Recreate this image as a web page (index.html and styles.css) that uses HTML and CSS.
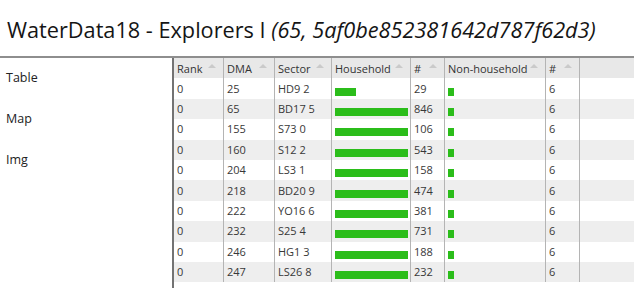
FILE: index.html
```html
<!DOCTYPE html>
<html>
<head>
<meta charset="utf-8">
<link rel="stylesheet" href="styles.css">
</head>
<body>
<header class="top">
  <h1 class="title">WaterData18 - Explorers I <em>(65, 5af0be852381642d787f62d3)</em></h1>
</header>
<div class="layout">
  <nav class="side">
    <a class="side-link">Table</a>
    <a class="side-link">Map</a>
    <a class="side-link">Img</a>
  </nav>
  <main class="panel">
    <table class="grid">
      <colgroup>
        <col class="c-rank"><col class="c-dma"><col class="c-sector"><col class="c-hh"><col class="c-num"><col class="c-nhh"><col class="c-num2"><col>
      </colgroup>
      <thead>
        <tr>
          <th><div class="th-in">Rank<span class="sort"></span></div></th>
          <th><div class="th-in">DMA<span class="sort"></span></div></th>
          <th><div class="th-in">Sector<span class="sort"></span></div></th>
          <th><div class="th-in">Household<span class="sort"></span></div></th>
          <th><div class="th-in">#<span class="sort"></span></div></th>
          <th><div class="th-in">Non-household<span class="sort"></span></div></th>
          <th><div class="th-in">#<span class="sort"></span></div></th>
          <th class="filler"></th>
        </tr>
      </thead>
      <tbody>
        <tr><td>0</td><td>25</td><td>HD9 2</td><td><span class="bar" style="width:29%"></span></td><td>29</td><td><span class="bar" style="width:6%"></span></td><td>6</td><td class="filler"></td></tr>
        <tr><td>0</td><td>65</td><td>BD17 5</td><td><span class="bar" style="width:100%"></span></td><td>846</td><td><span class="bar" style="width:6%"></span></td><td>6</td><td class="filler"></td></tr>
        <tr><td>0</td><td>155</td><td>S73 0</td><td><span class="bar" style="width:100%"></span></td><td>106</td><td><span class="bar" style="width:6%"></span></td><td>6</td><td class="filler"></td></tr>
        <tr><td>0</td><td>160</td><td>S12 2</td><td><span class="bar" style="width:100%"></span></td><td>543</td><td><span class="bar" style="width:6%"></span></td><td>6</td><td class="filler"></td></tr>
        <tr><td>0</td><td>204</td><td>LS3 1</td><td><span class="bar" style="width:100%"></span></td><td>158</td><td><span class="bar" style="width:6%"></span></td><td>6</td><td class="filler"></td></tr>
        <tr><td>0</td><td>218</td><td>BD20 9</td><td><span class="bar" style="width:100%"></span></td><td>474</td><td><span class="bar" style="width:6%"></span></td><td>6</td><td class="filler"></td></tr>
        <tr><td>0</td><td>222</td><td>YO16 6</td><td><span class="bar" style="width:100%"></span></td><td>381</td><td><span class="bar" style="width:6%"></span></td><td>6</td><td class="filler"></td></tr>
        <tr><td>0</td><td>232</td><td>S25 4</td><td><span class="bar" style="width:100%"></span></td><td>731</td><td><span class="bar" style="width:6%"></span></td><td>6</td><td class="filler"></td></tr>
        <tr><td>0</td><td>246</td><td>HG1 3</td><td><span class="bar" style="width:100%"></span></td><td>188</td><td><span class="bar" style="width:6%"></span></td><td>6</td><td class="filler"></td></tr>
        <tr><td>0</td><td>247</td><td>LS26 8</td><td><span class="bar" style="width:100%"></span></td><td>232</td><td><span class="bar" style="width:6%"></span></td><td>6</td><td class="filler"></td></tr>
      </tbody>
    </table>
  </main>
</div>
</body>
</html>
```

FILE: styles.css
```css
html, body {
  margin: 0;
  padding: 0;
  background: #fff;
  font-family: "Open Sans", "Noto Sans", sans-serif;
  color: #222;
  overflow: hidden;
}

.top {
  height: 58px;
  border-bottom: 2px solid #8e8e8e;
  box-sizing: border-box;
  padding: 16px 0 0 7px;
}

.title {
  margin: 0;
  font-size: 21.7px;
  font-weight: 400;
  line-height: 28px;
  color: #151515;
  white-space: nowrap;
}

.title em {
  font-style: italic;
}

.layout {
  display: flex;
  height: 230px;
}

.side {
  width: 172px;
  flex: none;
  display: flex;
  flex-direction: column;
  padding: 11px 0 0 6px;
  box-sizing: border-box;
  gap: 23px;
}

.side-link {
  font-size: 12.5px;
  line-height: 18px;
  color: #222;
}

.panel {
  flex: 1;
  border-left: 2px solid #737373;
  min-width: 0;
  overflow: hidden;
}

.grid {
  width: 100%;
  table-layout: fixed;
  border-collapse: separate;
  border-spacing: 0;
  font-size: 11px;
  color: #383838;
}

.c-rank { width: 50px; }
.c-dma { width: 51px; }
.c-sector { width: 57px; }
.c-hh { width: 79px; }
.c-num { width: 34px; }
.c-nhh { width: 101px; }
.c-num2 { width: 34px; }

.grid th {
  background: #e8e8e8;
  font-weight: 400;
  text-align: left;
  height: 20.4px;
  padding: 0 0 0 3px;
  border-right: 1px solid #b4b4b4;
  box-sizing: border-box;
  white-space: nowrap;
  color: #333;
}

.th-in {
  display: flex;
  align-items: center;
  justify-content: space-between;
  padding-right: 7px;
}

.sort {
  width: 0;
  height: 0;
  border-left: 4px solid transparent;
  border-right: 4px solid transparent;
  border-bottom: 4px solid #cacaca;
  margin-top: -5px;
}

.grid td {
  height: 20.4px;
  padding: 0 2px 0 3px;
  border-right: 1px solid #b4b4b4;
  box-sizing: border-box;
  white-space: nowrap;
  line-height: 16px;
}

.grid th.filler, .grid td.filler {
  border-right: none;
}

.grid tbody tr:nth-child(even) td {
  background: #eeeeee;
}

.bar {
  display: inline-block;
  height: 8px;
  background: #2bbd1a;
  vertical-align: -3px;
}
```
